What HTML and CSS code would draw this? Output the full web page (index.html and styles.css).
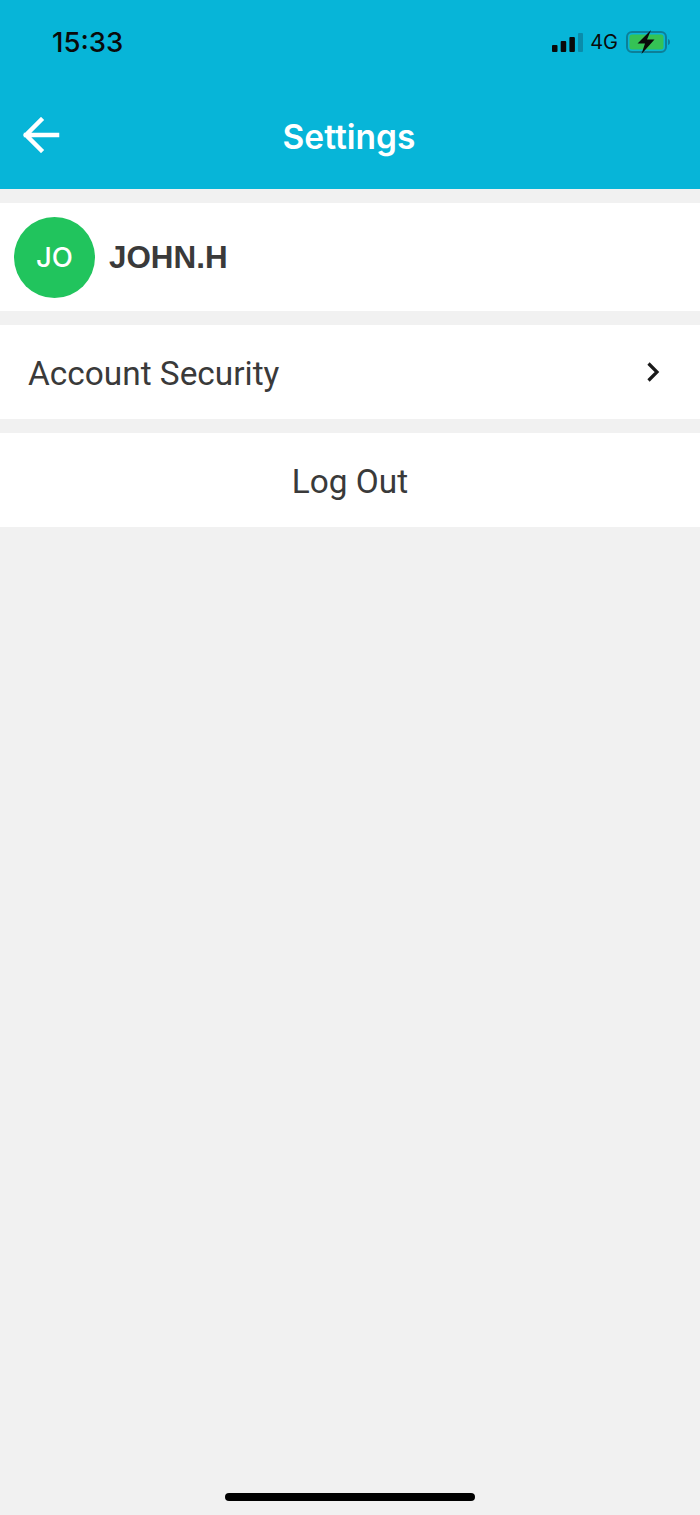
FILE: index.html
```html
<!DOCTYPE html>
<html lang="en">
  <head>
    <meta charset="UTF-8" />
    <meta name="viewport" content="width=device-width, initial-scale=1.0" />
    <title>Settings</title>
    <link rel="stylesheet" href="styles.css">
  </head>
  <body>
    <header class="header">
      <div class="status-bar">
        <span class="time">15:33</span>
        <div class="status-icons">
          <svg class="signal" width="31" height="19" viewBox="0 0 31 19">
            <rect x="0" y="12" width="5.500" height="7" rx="1" fill="#0a0a0a" />
            <rect x="8.700" y="8" width="5.500" height="11" rx="1" fill="#0a0a0a" />
            <rect x="17.400" y="4" width="5.500" height="15" rx="1" fill="#0a0a0a" />
            <rect x="26" y="0" width="5" height="19" rx="1" fill="#0a8cab" />
          </svg>
          <span class="network">4G</span>
          <svg class="battery" width="45" height="24" viewBox="0 0 45 24">
            <rect x="1" y="2" width="39" height="20" rx="5" fill="none" stroke="#0d7f98" stroke-width="2" />
            <rect x="3.500" y="4.500" width="34" height="15" rx="2.500" fill="#35c255" />
            <path d="M42 9c1.500 .5 2 1.500 2 3s-.5 2.500-2 3z" fill="#0d7f98" />
            <path d="M25 0L11.500 13.500h7.500L15.500 24 28.500 9.500h-7.500z" fill="#0a0a0a" />
          </svg>
        </div>
      </div>
      <nav class="nav-bar">
        <svg class="back-icon" width="38" height="36" viewBox="0 0 38 36">
          <path d="M19 3L4 18l15 15M4 18h31" fill="none" stroke="#fff" stroke-width="4.500" stroke-linecap="square" />
        </svg>
        <h1>Settings</h1>
      </nav>
    </header>

    <main class="content">
      <div class="row profile-row">
        <div class="avatar">JO</div>
        <span class="user-name">JOHN.H</span>
      </div>
      <div class="row link-row">
        <span class="row-label">Account Security</span>
        <svg width="14" height="22" viewBox="0 0 14 22">
          <path d="M2.500 2.500L11 11l-8.500 8.500" fill="none" stroke="#1a1a1a" stroke-width="3.200" />
        </svg>
      </div>
      <div class="row logout-row">
        <span class="row-label">Log Out</span>
      </div>
    </main>

    <div class="home-area">
      <div class="home-bar"></div>
    </div>
  </body>
</html>
```

FILE: styles.css
```css
body {
  font-family: Roboto, "Liberation Sans", sans-serif;
  margin: 0;
  height: 1515px;
  display: flex;
  flex-direction: column;
  background-color: #f1f1f1;
  color: #3a3a3a;
}

/* Top bar */
.header {
  height: 189px;
  background-color: #07b5d8;
}
.status-bar {
  height: 84px;
  padding: 0 29px 0 52px;
  display: flex;
  justify-content: space-between;
  align-items: center;
}
.time {
  font-family: Inter, sans-serif;
  font-size: 27.500px;
  font-weight: 500;
  color: #0a0a0a;
}
.status-icons {
  display: flex;
  align-items: center;
}
.network {
  font-family: Inter, sans-serif;
  font-size: 20px;
  color: #0a0a0a;
  margin: 0 8px 0 7px;
}
.nav-bar {
  position: relative;
  height: 105px;
  display: flex;
  justify-content: center;
  align-items: center;
}
.back-icon {
  position: absolute;
  left: 22px;
  top: 33px;
}
h1 {
  margin: 0;
  padding-right: 2px;
  font-family: Inter, sans-serif;
  font-size: 33.500px;
  font-weight: 600;
  color: #fff;
}

/* Rows */
.content {
  flex: 1;
  display: flex;
  flex-direction: column;
  gap: 14px;
  padding-top: 14px;
}
.row {
  background-color: #fff;
  display: flex;
  align-items: center;
  font-size: 33.400px;
  line-height: 44px;
}
.row-label {
  padding-top: 4px;
}
.profile-row {
  height: 108px;
  padding-left: 14px;
}
.avatar {
  width: 81px;
  height: 81px;
  border-radius: 50%;
  background-color: #21c45d;
  color: #fff;
  font-family: Inter, sans-serif;
  font-size: 27.500px;
  font-weight: 500;
  display: flex;
  justify-content: center;
  align-items: center;
}
.user-name {
  margin-left: 14px;
  padding-top: 2px;
  font-family: "Liberation Sans", sans-serif;
  font-size: 31.400px;
  font-weight: 700;
}
.link-row {
  height: 94px;
  padding: 0 40px 0 28px;
  justify-content: space-between;
}
.logout-row {
  height: 94px;
  justify-content: center;
}

/* Home indicator */
.home-area {
  height: 22px;
  display: flex;
  justify-content: center;
}
.home-bar {
  width: 250px;
  height: 8px;
  border-radius: 4px;
  background-color: #000;
}
```
